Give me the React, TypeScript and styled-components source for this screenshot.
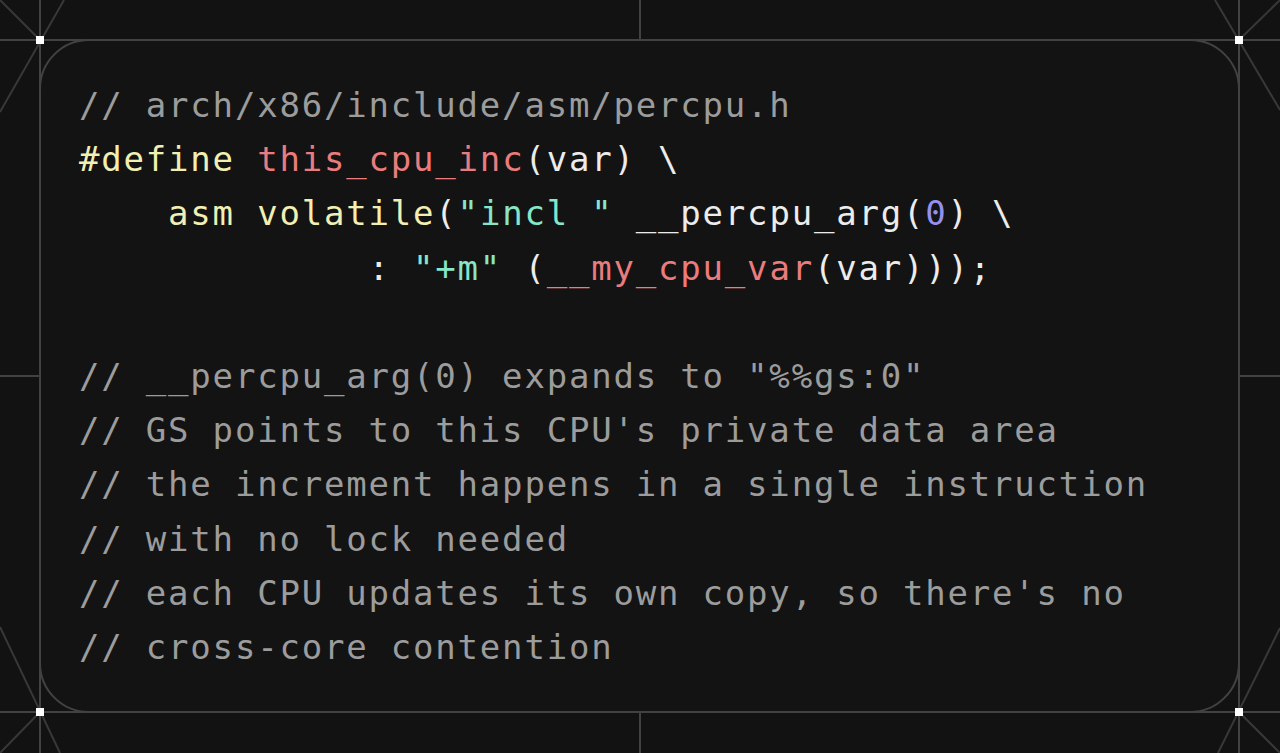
import React from "react";
import styled, { createGlobalStyle } from "styled-components";

const Global = createGlobalStyle`
  html, body { margin: 0; padding: 0; background: #121212; }
  * { box-sizing: border-box; }
`;

const Page = styled.div`
  position: relative;
  width: 1280px;
  height: 753px;
  overflow: hidden;
  background: #121212;
  padding: 39px 40px 40px 39px;
  display: flex;
`;

const Backdrop = styled.svg`
  position: absolute;
  inset: 0;
  width: 1280px;
  height: 753px;
  z-index: 0;
`;

const Overlay = styled(Backdrop)`
  z-index: 2;
  pointer-events: none;
`;

const Card = styled.div`
  position: relative;
  z-index: 1;
  flex: 1;
  border: 2px solid #424242;
  border-radius: 50px;
  background: #131313;
  padding: 37px 38px;
`;

const Code = styled.pre`
  margin: 0;
  font-family: "DejaVu Sans Mono", "Liberation Mono", monospace;
  font-size: 34px;
  letter-spacing: 1.8px;
  line-height: 54.2px;
  color: #ececec;
  white-space: pre;
`;

const Line = styled.div`
  height: 54.2px;
`;

type Kind = "c" | "k" | "f" | "s" | "n" | "p";
const colors: Record<Kind, string> = {
  c: "#9c9c9c",
  k: "#f2efb2",
  f: "#ea7c7e",
  s: "#86e6c8",
  n: "#9490ee",
  p: "#ececec",
};

const Tok = styled.span<{ $k: Kind }>`
  color: ${(p) => colors[p.$k]};
`;

const Marker = styled.rect`
  fill: #ffffff;
`;

type Seg = [Kind, string];
const lines: Seg[][] = [
  [["c", "// arch/x86/include/asm/percpu.h"]],
  [["k", "#define"], ["p", " "], ["f", "this_cpu_inc"], ["p", "(var) \\"]],
  [["k", "    asm volatile"], ["p", "("], ["s", "\"incl \""], ["p", " __percpu_arg("], ["n", "0"], ["p", ") \\"]],
  [["p", "             : "], ["s", "\"+m\""], ["p", " ("], ["f", "__my_cpu_var"], ["p", "(var)));"]],
  [],
  [["c", "// __percpu_arg(0) expands to \"%%gs:0\""]],
  [["c", "// GS points to this CPU's private data area"]],
  [["c", "// the increment happens in a single instruction"]],
  [["c", "// with no lock needed"]],
  [["c", "// each CPU updates its own copy, so there's no"]],
  [["c", "// cross-core contention"]],
];

const L = "#424242";

export default function App() {
  const corners: [number, number][] = [
    [40, 40],
    [1239, 40],
    [40, 712],
    [1239, 712],
  ];
  return (
    <>
      <Global />
      <Page>
        <Backdrop viewBox="0 0 1280 753">
          <g stroke={L} strokeWidth={2} fill="none">
            <line x1={0} y1={40} x2={1280} y2={40} />
            <line x1={0} y1={712} x2={1280} y2={712} />
            <line x1={40} y1={0} x2={40} y2={753} />
            <line x1={1239} y1={0} x2={1239} y2={753} />
            <line x1={640} y1={0} x2={640} y2={40} />
            <line x1={640} y1={712} x2={640} y2={753} />
            <line x1={0} y1={376} x2={40} y2={376} />
            <line x1={1239} y1={376} x2={1280} y2={376} />
          </g>
          <g stroke="#383838" strokeWidth={2} fill="none">
            <line x1={0} y1={0} x2={40} y2={40} />
            <line x1={64} y1={0} x2={0} y2={112} />
            <line x1={1280} y1={0} x2={1239} y2={40} />
            <line x1={1215} y1={0} x2={1280} y2={110} />
            <line x1={0} y1={627} x2={60} y2={753} />
            <line x1={0} y1={753} x2={40} y2={712} />
            <line x1={1280} y1={628} x2={1218} y2={753} />
            <line x1={1280} y1={753} x2={1239} y2={712} />
          </g>
        </Backdrop>
        <Card>
          <Code>
            {lines.map((segs, i) => (
              <Line key={i}>
                {segs.map(([k, t], j) => (
                  <Tok key={j} $k={k}>
                    {t}
                  </Tok>
                ))}
              </Line>
            ))}
          </Code>
        </Card>
        <Overlay viewBox="0 0 1280 753">
          {corners.map(([x, y], i) => (
            <Marker key={i} x={x - 4} y={y - 4} width={8} height={8} />
          ))}
        </Overlay>
      </Page>
    </>
  );
}
